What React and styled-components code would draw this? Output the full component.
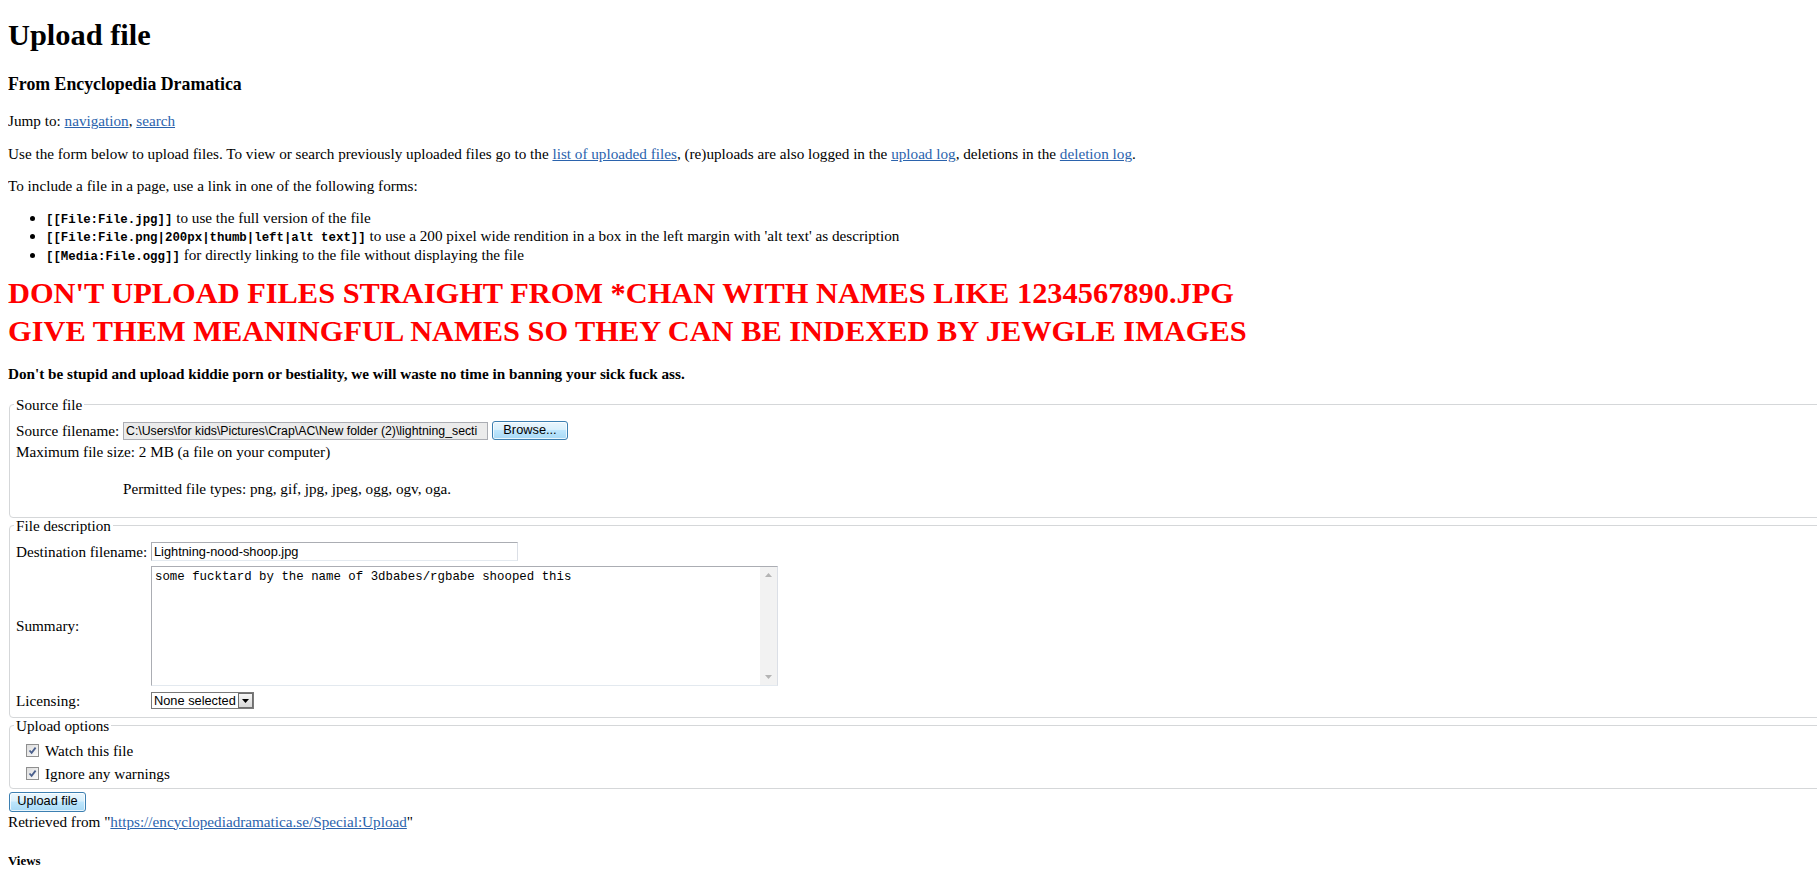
import React from "react";
import styled, { createGlobalStyle } from "styled-components";

const GlobalStyle = createGlobalStyle`
  html, body { background: #fff; }
  body {
    margin: 8px 0 0 8px;
    font-family: "Liberation Serif", "Times New Roman", serif;
    font-size: 15.2px;
    color: #000;
  }
`;

const Page = styled.div`
  overflow: hidden;
  padding-bottom: 4px;
`;

const Title = styled.h1`
  margin: 10px 0 0;
  font-size: 30.4px;
  line-height: 35px;
  font-weight: bold;
`;

const SiteSub = styled.h3`
  margin: 21px 0 0;
  font-size: 17.8px;
  line-height: 20px;
  font-weight: bold;
`;

const Para = styled.p`
  margin: ${(p) => (p.$top ?? 15)}px 0 0;
  line-height: 17.5px;
  font-weight: ${(p) => (p.$bold ? "bold" : "normal")};
`;

const Link = styled.a`
  color: #2b63ad;
  text-decoration: underline;
  cursor: pointer;
`;

const Bullets = styled.ul`
  margin: 14px 0 0;
  padding-left: 38px;
  list-style: disc;
`;

const BulletItem = styled.li`
  line-height: 18.5px;
`;

const Code = styled.code`
  font-family: "Liberation Mono", "Courier New", monospace;
  font-size: 12.4px;
  font-weight: bold;
  line-height: 1;
`;

const Warning = styled.div`
  margin-top: 9.5px;
  color: #ff0000;
  font-size: 30.4px;
  font-weight: bold;
`;

const WarningLine = styled.div`
  line-height: 38px;
  white-space: nowrap;
`;

const Fieldset = styled.fieldset`
  margin: ${(p) => p.$top}px -40px 0 1px;
  padding: ${(p) => p.$padTop}px 0 ${(p) => p.$padBottom}px 6px;
  border: 1px solid #d5d7d9;
  border-radius: 4px;
  min-width: 0;
`;

const Legend = styled.legend`
  padding: 0 2px;
  margin-left: -2px;
  line-height: 15px;
`;

const FieldGrid = styled.div`
  display: grid;
  grid-template-columns: ${(p) => p.$labelWidth} 1fr;
  row-gap: ${(p) => p.$rowGap}px;
  align-items: center;
`;

const Label = styled.div`
  line-height: 17.5px;
  white-space: nowrap;
`;

const Cell = styled.div`
  display: flex;
  align-items: center;
  min-height: ${(p) => p.$h || 0}px;
`;

const FullRow = styled.div`
  grid-column: 1 / -1;
  line-height: 17.5px;
`;

const HelpText = styled.div`
  grid-column: 2;
  line-height: 17.5px;
  padding: 17.5px 0 15px;
`;

const sans = `"Liberation Sans", Arial, sans-serif`;

const FileBox = styled.div`
  box-sizing: border-box;
  width: 365px;
  height: 18px;
  border: 1px solid #abadb3;
  background: #ebebeb;
  font-family: ${sans};
  font-size: 12.3px;
  line-height: 16px;
  padding-left: 2px;
  white-space: nowrap;
  overflow: hidden;
`;

const TextBox = styled.div`
  box-sizing: border-box;
  width: ${(p) => p.$w}px;
  height: 19px;
  border: 1px solid #abadb3;
  border-right-color: #dbdfe6;
  border-bottom-color: #e3e9ef;
  background: #fff;
  font-family: ${sans};
  font-size: 12.8px;
  line-height: 17px;
  padding-left: 2px;
  white-space: nowrap;
  overflow: hidden;
`;

const WinButton = styled.button`
  box-sizing: border-box;
  height: ${(p) => p.$h}px;
  width: ${(p) => p.$w}px;
  padding: 0;
  margin: 0 0 0 ${(p) => p.$ml || 0}px;
  font-family: ${sans};
  font-size: 12.8px;
  color: #000;
  border: 1px solid #3c7fb1;
  border-radius: 3px;
  background: linear-gradient(#eaf6fd 0%, #d9f0fc 45%, #bee6fd 50%, #a7d9f5 100%);
  box-shadow: inset 0 0 0 1px rgba(255, 255, 255, 0.75);
  line-height: 1;
`;

const Summary = styled.div`
  box-sizing: border-box;
  width: 627px;
  height: 120px;
  border: 1px solid #abadb3;
  border-right-color: #dbdfe6;
  border-bottom-color: #e3e9ef;
  background: #fff;
  display: flex;
`;

const SummaryText = styled.div`
  flex: 1;
  padding: 3px 3px;
  font-family: "Liberation Mono", "Courier New", monospace;
  font-size: 12.4px;
  line-height: 14px;
`;

const ScrollTrack = styled.div`
  width: 17px;
  background: #f2f2f2;
  display: flex;
  flex-direction: column;
  justify-content: space-between;
  align-items: center;
  padding: 6px 0;
  box-sizing: border-box;
`;

const Select = styled.div`
  box-sizing: border-box;
  display: flex;
  width: 103px;
  height: 17px;
  border: 1px solid #7a7a7a;
  background: #fff;
  font-family: ${sans};
  font-size: 12.8px;
`;

const SelectText = styled.span`
  flex: 1;
  padding-left: 2px;
  line-height: 15px;
  white-space: nowrap;
  overflow: hidden;
`;

const SelectArrow = styled.span`
  width: 15px;
  box-sizing: border-box;
  border: 1px solid #6f6f6f;
  background: linear-gradient(#f6f6f6, #d8d8d8);
  display: flex;
  align-items: center;
  justify-content: center;
`;

const CheckRow = styled.div`
  display: flex;
  align-items: center;
  height: 21px;
  padding-left: 10px;
  gap: 6px;
  line-height: 17.5px;
  margin-top: ${(p) => p.$top || 0}px;
`;

const CheckBox = styled.span`
  box-sizing: border-box;
  width: 13px;
  height: 13px;
  border: 1px solid #8f8f8f;
  background: linear-gradient(135deg, #dcdcdc, #fbfbfb);
  display: flex;
  align-items: center;
  justify-content: center;
`;

const ButtonRow = styled.div`
  margin: 2.5px 0 0 1px;
  display: flex;
`;

const Views = styled.h3`
  margin: 24px 0 0;
  font-size: 12.9px;
  line-height: 15px;
  font-weight: bold;
`;

const Tri = ({ dir = "down", color = "#000", w = 7, h = 4 }) => (
  <svg width={w} height={h} viewBox="0 0 7 4">
    {dir === "down" ? (
      <polygon points="0,0 7,0 3.5,4" fill={color} />
    ) : (
      <polygon points="0,4 7,4 3.5,0" fill={color} />
    )}
  </svg>
);

const Check = () => (
  <svg width="9" height="9" viewBox="0 0 9 9">
    <path d="M1.5 4.5 L3.6 6.8 L7.6 1.6" fill="none" stroke="#4a5f8c" strokeWidth="1.8" />
  </svg>
);

export default function App() {
  return (
    <Page>
      <GlobalStyle />
      <Title>Upload file</Title>
      <SiteSub>From Encyclopedia Dramatica</SiteSub>
      <Para $top={18}>
        Jump to: <Link>navigation</Link>, <Link>search</Link>
      </Para>
      <Para>
        Use the form below to upload files. To view or search previously uploaded files go to the{" "}
        <Link>list of uploaded files</Link>, (re)uploads are also logged in the <Link>upload log</Link>,
        deletions in the <Link>deletion log</Link>.
      </Para>
      <Para>To include a file in a page, use a link in one of the following forms:</Para>
      <Bullets>
        <BulletItem>
          <Code>[[File:File.jpg]]</Code> to use the full version of the file
        </BulletItem>
        <BulletItem>
          <Code>[[File:File.png|200px|thumb|left|alt text]]</Code> to use a 200 pixel wide rendition in a box
          in the left margin with 'alt text' as description
        </BulletItem>
        <BulletItem>
          <Code>[[Media:File.ogg]]</Code> for directly linking to the file without displaying the file
        </BulletItem>
      </Bullets>
      <Warning>
        <WarningLine>DON'T UPLOAD FILES STRAIGHT FROM *CHAN WITH NAMES LIKE 1234567890.JPG</WarningLine>
        <WarningLine>GIVE THEM MEANINGFUL NAMES SO THEY CAN BE INDEXED BY JEWGLE IMAGES</WarningLine>
      </Warning>
      <Para $bold>
        Don't be stupid and upload kiddie porn or bestiality, we will waste no time in banning your sick fuck ass.
      </Para>

      <form onSubmit={(e) => e.preventDefault()}>
        <Fieldset $top={15} $padTop={8.5} $padBottom={5}>
          <Legend>Source file</Legend>
          <FieldGrid $labelWidth="107px" $rowGap={2}>
            <Label>Source filename:</Label>
            <Cell $h={20}>
              <FileBox>C:\Users\for kids\Pictures\Crap\AC\New folder (2)\lightning_secti</FileBox>
              <WinButton type="button" $h={19} $w={76} $ml={4}>
                Browse...
              </WinButton>
            </Cell>
            <FullRow>Maximum file size: 2 MB (a file on your computer)</FullRow>
            <HelpText>Permitted file types: png, gif, jpg, jpeg, ogg, ogv, oga.</HelpText>
          </FieldGrid>
        </Fieldset>

        <Fieldset $top={0} $padTop={8} $padBottom={6}>
          <Legend>File description</Legend>
          <FieldGrid $labelWidth="135px" $rowGap={3}>
            <Label>Destination filename:</Label>
            <Cell $h={21}>
              <TextBox $w={367}>Lightning-nood-shoop.jpg</TextBox>
            </Cell>
            <Label>Summary:</Label>
            <Cell $h={122}>
              <Summary>
                <SummaryText>some fucktard by the name of 3dbabes/rgbabe shooped this</SummaryText>
                <ScrollTrack>
                  <Tri dir="up" color="#b4b4b4" />
                  <Tri dir="down" color="#b4b4b4" />
                </ScrollTrack>
              </Summary>
            </Cell>
            <Label>Licensing:</Label>
            <Cell $h={21}>
              <Select>
                <SelectText>None selected</SelectText>
                <SelectArrow>
                  <Tri dir="down" />
                </SelectArrow>
              </Select>
            </Cell>
          </FieldGrid>
        </Fieldset>

        <Fieldset $top={0} $padTop={7} $padBottom={4}>
          <Legend>Upload options</Legend>
          <CheckRow>
            <CheckBox>
              <Check />
            </CheckBox>
            Watch this file
          </CheckRow>
          <CheckRow $top={2}>
            <CheckBox>
              <Check />
            </CheckBox>
            Ignore any warnings
          </CheckRow>
        </Fieldset>

        <ButtonRow>
          <WinButton type="submit" $h={20} $w={77}>
            Upload file
          </WinButton>
        </ButtonRow>
      </form>

      <Para $top={1}>
        Retrieved from "<Link>https://encyclopediadramatica.se/Special:Upload</Link>"
      </Para>
      <Views>Views</Views>
    </Page>
  );
}
